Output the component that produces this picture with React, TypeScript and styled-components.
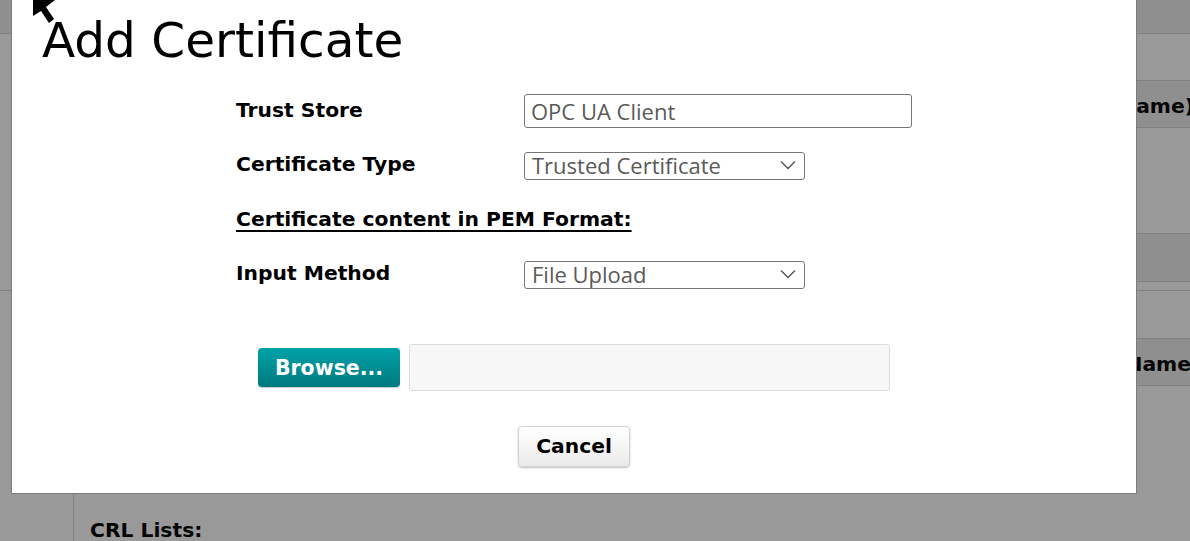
import React from "react";
import styled, { createGlobalStyle } from "styled-components";

const GlobalStyle = createGlobalStyle`
  html, body {
    margin: 0;
    padding: 0;
    background: #999999;
    overflow: hidden;
  }
  body {
    font-family: "DejaVu Sans", Verdana, sans-serif;
  }
  * { box-sizing: border-box; }
`;

const Page = styled.div`
  position: relative;
  width: 1200px;
  height: 541px;
  overflow: hidden;
  background: #999999;
`;

const TopBar = styled.div`
  height: 34px;
  background: #8f8f8f;
  border-bottom: 1px solid #808080;
`;

const Section = styled.div<{ $height?: number }>`
  display: flex;
  ${(p) => (p.$height ? `height: ${p.$height}px;` : "")}
  border-bottom: ${(p) => (p.$height ? "1px solid #808080" : "none")};
`;

const SideColumn = styled.div<{ $line?: boolean }>`
  width: 74px;
  flex: none;
  border-right: ${(p) => (p.$line ? "1px solid #808080" : "none")};
`;

const Content = styled.div`
  flex: 1;
  display: flex;
  flex-direction: column;
`;

const Band = styled.div<{ $h: number; $dark?: boolean; $noLine?: boolean }>`
  height: ${(p) => p.$h}px;
  flex: none;
  background: ${(p) => (p.$dark ? "#8f8f90" : "#999999")};
  border-bottom: ${(p) => (p.$noLine ? "none" : "1px solid #808080")};
  display: flex;
  align-items: center;
  justify-content: flex-end;
  padding-right: ${(p) => (p.$dark ? 6 : 0)}px;
  padding-top: ${(p) => (p.$dark ? 4 : 0)}px;
`;

const HeaderText = styled.span<{ $pr?: number }>`
  font-family: "DejaVu Sans", Verdana, sans-serif;
  font-weight: bold;
  font-size: 20.3px;
  color: #050505;
  white-space: nowrap;
  padding-right: ${(p) => p.$pr ?? 0}px;
`;

const SectionTitle = styled.h3`
  margin: 0;
  padding: 14px 0 0 16px;
  font-family: "DejaVu Sans", Verdana, sans-serif;
  font-weight: bold;
  font-size: 20.3px;
  color: #050505;
`;

const Modal = styled.div`
  position: absolute;
  left: 11px;
  top: -1px;
  width: 1126px;
  height: 495px;
  background: #ffffff;
  border: 1px solid #7c7c7c;
  display: flex;
  flex-direction: column;
`;

const Title = styled.h1`
  margin: 12px 0 0 0;
  padding-left: 30px;
  font-family: "DejaVu Sans", Verdana, sans-serif;
  font-weight: normal;
  font-size: 48.5px;
  line-height: 56px;
  color: #000;
`;

const Form = styled.div`
  margin: 26px 0 0 224px;
  display: flex;
  flex-direction: column;
`;

const Row = styled.div<{ $gap: number }>`
  display: flex;
  align-items: flex-start;
  margin-bottom: ${(p) => p.$gap}px;
`;

const Label = styled.label<{ $offset?: number; $underline?: boolean }>`
  width: 288px;
  flex: none;
  margin-top: ${(p) => p.$offset ?? 0}px;
  font-family: "DejaVu Sans", Verdana, sans-serif;
  font-weight: bold;
  font-size: 20.3px;
  color: #000;
  white-space: nowrap;
  text-decoration: ${(p) => (p.$underline ? "underline" : "none")};
  text-decoration-thickness: 2px;
  text-underline-offset: 4px;
`;

const TextInput = styled.input`
  width: 388px;
  height: 34px;
  border: 1px solid #767676;
  border-radius: 3px;
  padding: 0 6px;
  font-family: "Open Sans", "Noto Sans", sans-serif;
  font-size: 22px;
  color: #5a5a5a;
  background: #fff;
  outline: none;
`;

const SelectBox = styled.div`
  width: 281px;
  height: 28px;
  border: 1px solid #767676;
  border-radius: 3px;
  padding: 0 8px 2px 7px;
  display: flex;
  align-items: center;
  justify-content: space-between;
  font-family: "Open Sans", "Noto Sans", sans-serif;
  font-size: 22px;
  color: #5a5a5a;
  background: #fff;
  line-height: 25px;
`;

const UploadRow = styled.div`
  margin-top: 55px;
  display: flex;
  align-items: center;
  justify-content: center;
  gap: 9px;
`;

const BrowseButton = styled.button`
  width: 142px;
  height: 39px;
  border: none;
  border-radius: 4px;
  background: linear-gradient(#00a2a8, #007a80);
  color: #fff;
  font-family: "DejaVu Sans", Verdana, sans-serif;
  font-weight: bold;
  font-size: 20.5px;
  box-shadow: 0 1px 1px rgba(0, 0, 0, 0.2);
  padding: 0;
`;

const FileBox = styled.div`
  width: 481px;
  height: 47px;
  background: #f7f7f7;
  border: 1px solid #dcdcdc;
  border-radius: 3px;
`;

const Actions = styled.div`
  margin-top: 35px;
  display: flex;
  justify-content: center;
`;

const CancelButton = styled.button`
  width: 112px;
  height: 41px;
  border: 1px solid #d2d2d2;
  border-radius: 4px;
  background: linear-gradient(#ffffff, #ebebeb);
  box-shadow: 0 1px 2px rgba(0, 0, 0, 0.25);
  font-family: "DejaVu Sans", Verdana, sans-serif;
  font-weight: bold;
  font-size: 20.3px;
  color: #000;
  padding: 0 0 2px 0;
`;

const Cursor = styled.svg`
  position: absolute;
  left: 30px;
  top: 0;
`;

const Chevron = () => (
  <svg width="16" height="10" viewBox="0 0 16 10">
    <path d="M1 1.5 L8 8.5 L15 1.5" fill="none" stroke="#555" strokeWidth="1.4" />
  </svg>
);

export default function App() {
  return (
    <>
      <GlobalStyle />
      <Page>
        <TopBar />
        <Section $height={257}>
          <SideColumn />
          <Content>
            <Band $h={47} />
            <Band $h={47} $dark>
              <HeaderText>Issued To (Common Name)</HeaderText>
            </Band>
            <Band $h={106} />
            <Band $h={48} $dark />
          </Content>
        </Section>
        <Section>
          <SideColumn $line />
          <Content>
            <Band $h={48} />
            <Band $h={47} $dark>
              <HeaderText $pr={3}>Issuer Name</HeaderText>
            </Band>
            <Band $h={118} $noLine />
            <SectionTitle>CRL Lists:</SectionTitle>
          </Content>
        </Section>

        <Modal>
          <Title>Add Certificate</Title>
          <Form>
            <Row $gap={24}>
              <Label $offset={4}>Trust Store</Label>
              <TextInput readOnly defaultValue="OPC UA Client" />
            </Row>
            <Row $gap={27}>
              <Label>Certificate Type</Label>
              <SelectBox>
                <span>Trusted Certificate</span>
                <Chevron />
              </SelectBox>
            </Row>
            <Row $gap={30}>
              <Label $underline>Certificate content in PEM Format:</Label>
            </Row>
            <Row $gap={0}>
              <Label>Input Method</Label>
              <SelectBox>
                <span>File Upload</span>
                <Chevron />
              </SelectBox>
            </Row>
          </Form>
          <UploadRow>
            <BrowseButton>Browse...</BrowseButton>
            <FileBox />
          </UploadRow>
          <Actions>
            <CancelButton>Cancel</CancelButton>
          </Actions>
        </Modal>

        <Cursor width="30" height="26" viewBox="0 0 30 26">
          <path d="M3 0 L25 0 L16 7 L24 19 L19 23 L11 11 L3 16 Z" fill="#000" />
        </Cursor>
      </Page>
    </>
  );
}
